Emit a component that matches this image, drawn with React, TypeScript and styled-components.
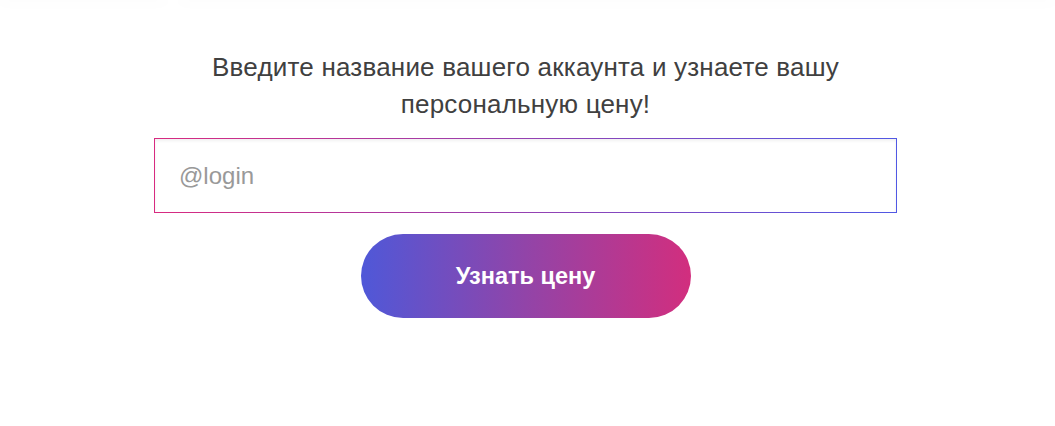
import React from 'react';
import styled, { createGlobalStyle } from 'styled-components';

const GlobalStyle = createGlobalStyle`
  html, body {
    margin: 0;
    padding: 0;
    background: #fff;
  }
  body {
    font-family: "Liberation Sans", Arial, sans-serif;
    color: #333;
  }
`;

const TopBar = styled.div`
  display: flex;
  gap: 14px;
  height: 0;
`;

const TopShade = styled.div<{ $width?: number }>`
  flex: ${(p) => (p.$width ? `0 0 ${p.$width}px` : '1 1 0')};
  height: 0;
  box-shadow: 0 0 14px 2px rgba(0, 0, 0, 0.035);
`;

const Section = styled.section`
  padding: 49px 4px 0 0;
  height: 377px;
  box-sizing: border-box;
`;

const Container = styled.div`
  width: 743px;
  margin: 0 auto;
  display: flex;
  flex-direction: column;
  align-items: center;
`;

const Title = styled.p`
  margin: 0 0 15px;
  font-size: 26px;
  line-height: 37px;
  font-weight: 300;
  letter-spacing: 0.2px;
  text-align: center;
  color: #404040;
`;

const LoginInput = styled.input`
  box-sizing: border-box;
  width: 100%;
  height: 75px;
  padding: 0 24px;
  border: 1px solid transparent;
  border-radius: 0;
  background:
    linear-gradient(#fff, #fff) padding-box,
    linear-gradient(90deg, #d82a80, #5158e4) border-box;
  box-shadow: inset 0 2px 3px rgba(0, 0, 0, 0.06);
  font-family: "Liberation Sans", Arial, sans-serif;
  font-size: 24px;
  color: #333;
  outline: none;

  &::placeholder {
    color: #999;
  }
`;

const PriceButton = styled.button`
  margin-top: 21px;
  width: 330px;
  height: 84px;
  border: none;
  border-radius: 42px;
  background: linear-gradient(90deg, #4f58d8 0%, #9244a8 50%, #d22e7e 100%);
  color: #fff;
  font-family: "Liberation Sans", Arial, sans-serif;
  font-size: 23.5px;
  font-weight: 700;
  cursor: pointer;
`;

const App: React.FC = () => {
  return (
    <>
      <GlobalStyle />
      <TopBar>
        <TopShade $width={166} />
        <TopShade />
      </TopBar>
      <Section>
        <Container>
          <Title>
            Введите название вашего аккаунта и узнаете вашу
            <br />
            персональную цену!
          </Title>
          <LoginInput type="text" placeholder="@login" />
          <PriceButton>Узнать цену</PriceButton>
        </Container>
      </Section>
    </>
  );
};

export default App;
